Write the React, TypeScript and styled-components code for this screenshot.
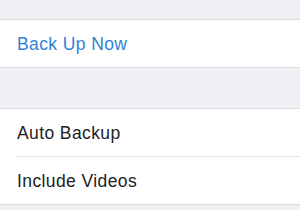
import React, { FC } from "react";
import styled, { createGlobalStyle } from "styled-components";

const GlobalStyle = createGlobalStyle`
    html, body {
        margin: 0;
        padding: 0;
        background: #efeff4;
        font-family: "Liberation Sans", Arial, sans-serif;
    }
`

interface IRow {
    last?: boolean,
}

interface ILabel {
    accent?: boolean,
}

const App: FC = () => {
    return <>
        <GlobalStyle />
        <Page>
            <Spacer height={19} />
            <Group>
                <Row last><Label accent>Back Up Now</Label></Row>
            </Group>
            <Spacer height={40} />
            <Group>
                <Row><Label>Auto Backup</Label></Row>
                <Row last><Label>Include Videos</Label></Row>
            </Group>
        </Page>
    </>
}

const Page = styled.div`
    width: 300px;
    height: 210px;
    overflow: hidden;
    background: #efeff4;
`

const Spacer = styled.div<{ height: number }>`
    height: ${props => props.height}px;
`

const Group = styled.div`
    background: #fff;
    border-top: 1px solid #dcdce0;
    border-bottom: 1px solid #dcdce0;
`

const Row = styled.div<IRow>`
    height: 47px;
    margin-left: 17px;
    display: flex;
    align-items: center;
    border-bottom: ${props => props.last ? "none" : "1px solid #e2e2e6"};
`

const Label = styled.div<ILabel>`
    font-size: 17.5px;
    letter-spacing: 0.4px;
    padding-top: 1px;
    color: ${props => props.accent ? "#2f83d6" : "#222"};
`

export default App;
